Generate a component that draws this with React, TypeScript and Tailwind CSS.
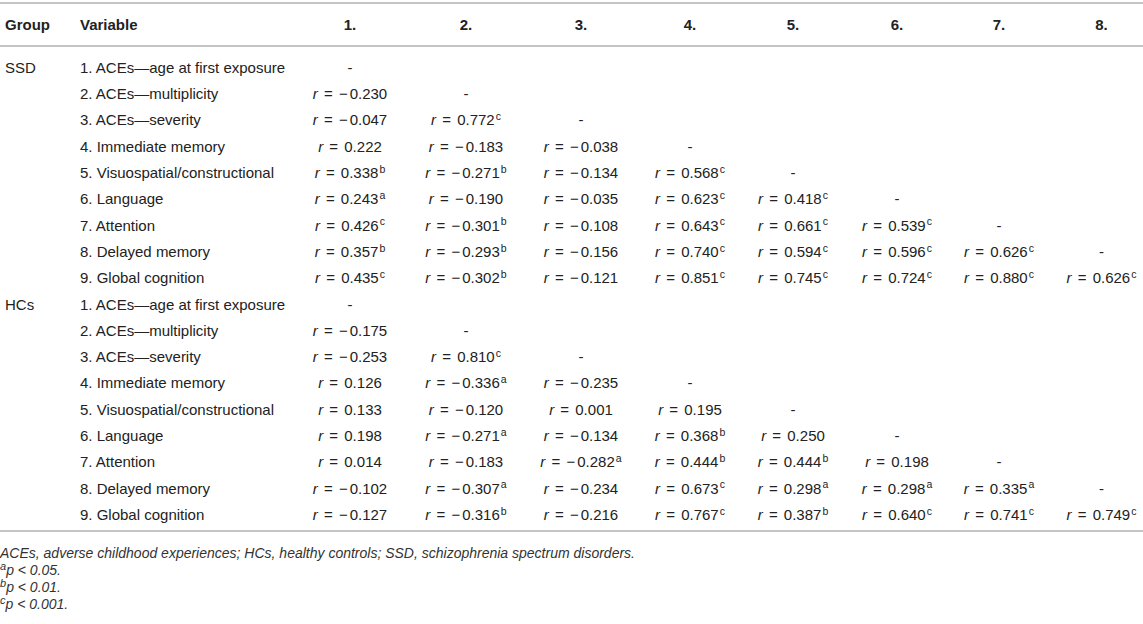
import React from "react";

type Cell = string;

const variables = [
  "1. ACEs\u2014age at first exposure",
  "2. ACEs\u2014multiplicity",
  "3. ACEs\u2014severity",
  "4. Immediate memory",
  "5. Visuospatial/constructional",
  "6. Language",
  "7. Attention",
  "8. Delayed memory",
  "9. Global cognition",
];

const ssd: Cell[][] = [
  ["-"],
  ["\u22120.230", "-"],
  ["\u22120.047", "0.772c", "-"],
  ["0.222", "\u22120.183", "\u22120.038", "-"],
  ["0.338b", "\u22120.271b", "\u22120.134", "0.568c", "-"],
  ["0.243a", "\u22120.190", "\u22120.035", "0.623c", "0.418c", "-"],
  ["0.426c", "\u22120.301b", "\u22120.108", "0.643c", "0.661c", "0.539c", "-"],
  ["0.357b", "\u22120.293b", "\u22120.156", "0.740c", "0.594c", "0.596c", "0.626c", "-"],
  ["0.435c", "\u22120.302b", "\u22120.121", "0.851c", "0.745c", "0.724c", "0.880c", "0.626c"],
];

const hcs: Cell[][] = [
  ["-"],
  ["\u22120.175", "-"],
  ["\u22120.253", "0.810c", "-"],
  ["0.126", "\u22120.336a", "\u22120.235", "-"],
  ["0.133", "\u22120.120", "0.001", "0.195", "-"],
  ["0.198", "\u22120.271a", "\u22120.134", "0.368b", "0.250", "-"],
  ["0.014", "\u22120.183", "\u22120.282a", "0.444b", "0.444b", "0.198", "-"],
  ["\u22120.102", "\u22120.307a", "\u22120.234", "0.673c", "0.298a", "0.298a", "0.335a", "-"],
  ["\u22120.127", "\u22120.316b", "\u22120.216", "0.767c", "0.387b", "0.640c", "0.741c", "0.749c"],
];

function Value({ v }: { v: string }) {
  if (v === "-") return <span>-</span>;
  const last = v[v.length - 1];
  const hasSup = last === "a" || last === "b" || last === "c";
  let num = hasSup ? v.slice(0, -1) : v;
  const neg = num.startsWith("\u2212");
  if (neg) num = num.slice(1);
  return (
    <span className="whitespace-nowrap">
      <i>r</i>
      <span className="mx-[2px]"> = </span>
      {neg && <span className="mr-[2px]">{"\u2212"}</span>}
      {num}
      {hasSup && <sup className="ml-[1px] text-[10.5px]">{last}</sup>}
    </span>
  );
}

const colW = ["w-[75px]", "w-[215px]", "w-[120px]", "w-[112px]", "w-[118px]", "w-[100px]", "w-[106px]", "w-[102px]", "w-[102px]", "w-[93px]"];

function Group({ name, rows }: { name: string; rows: Cell[][] }) {
  return (
    <>
      {rows.map((r, i) => (
        <tr key={i} className="h-[26.3px]">
          <td className="pl-[5px] text-left align-middle">{i === 0 ? name : ""}</td>
          <td className="pl-[5px] text-left align-middle whitespace-nowrap">{variables[i]}</td>
          {Array.from({ length: 8 }).map((_, j) => (
            <td key={j} className={j === 7 ? "pl-[10px] text-center align-middle" : "text-center align-middle"}>
              {r[j] !== undefined ? <Value v={r[j]} /> : null}
            </td>
          ))}
        </tr>
      ))}
    </>
  );
}

export default function App() {
  return (
    <div
      className="w-[1143px] h-[624px] bg-white text-[#222] overflow-hidden"
      style={{ fontFamily: '"Liberation Sans", Arial, Helvetica, sans-serif' }}
    >
      <div className="pt-[2px]">
        <table className="table-fixed border-collapse w-[1143px] text-[15px]">
          <colgroup>
            {colW.map((c, i) => (
              <col key={i} className={c} />
            ))}
          </colgroup>
          <thead>
            <tr className="h-[43px] border-t-2 border-b-2 border-[#c4c4c4] font-bold">
              <th className="pl-[5px] pt-[2px] text-left">Group</th>
              <th className="pl-[5px] pt-[2px] text-left">Variable</th>
              {["1.", "2.", "3.", "4.", "5.", "6.", "7.", "8."].map((h, i) => (
                <th key={h} className={i === 7 ? "pl-[10px] pt-[2px] text-center" : "pt-[2px] text-center"}>
                  {h}
                </th>
              ))}
            </tr>
          </thead>
          <tbody>
            <tr className="h-[9px]">
              <td colSpan={10}></td>
            </tr>
            <Group name="SSD" rows={ssd} />
            <Group name="HCs" rows={hcs} />
            <tr className="h-[3px] border-b-2 border-[#c4c4c4]">
              <td colSpan={10}></td>
            </tr>
          </tbody>
        </table>
        <div className="pt-[13px] text-[14px] leading-[17px] italic text-[#333]">
          <div>ACEs, adverse childhood experiences; HCs, healthy controls; SSD, schizophrenia spectrum disorders.</div>
          <div>
            <sup className="text-[11px]">a</sup>p &lt; 0.05.
          </div>
          <div>
            <sup className="text-[11px]">b</sup>p &lt; 0.01.
          </div>
          <div>
            <sup className="text-[11px]">c</sup>p &lt; 0.001.
          </div>
        </div>
      </div>
    </div>
  );
}
